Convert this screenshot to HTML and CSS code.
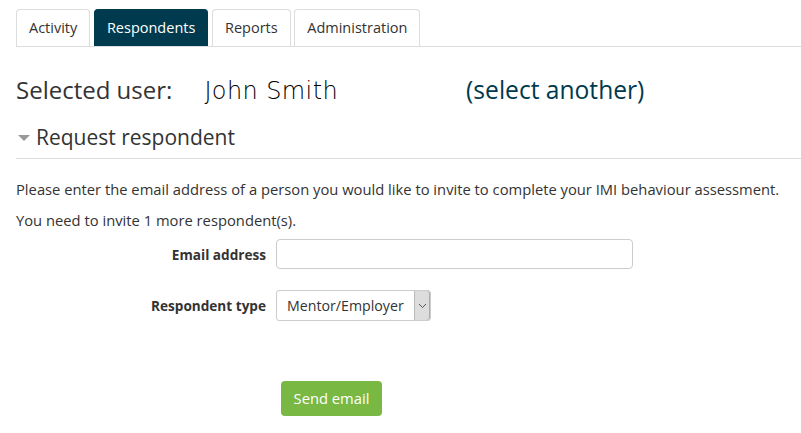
FILE: index.html
```html
<!DOCTYPE html>
<html>
<head>
<meta charset="utf-8">
<link rel="stylesheet" href="styles.css">
</head>
<body>
<div class="page">
  <ul class="tabs">
    <li class="tab">Activity</li>
    <li class="tab active">Respondents</li>
    <li class="tab">Reports</li>
    <li class="tab">Administration</li>
  </ul>
  <h2 class="selected">
    <span class="sel-label">Selected user:</span>
    <span class="sel-name">John Smith</span>
    <a class="sel-link">(select another)</a>
  </h2>
  <div class="legend">
    <span class="caret"></span>
    <span>Request respondent</span>
  </div>
  <p class="intro">Please enter the email address of a person you would like to invite to complete your IMI behaviour assessment.</p>
  <p class="intro second">You need to invite 1 more respondent(s).</p>
  <div class="form">
    <div class="row">
      <label class="lbl">Email address</label>
      <div class="input"></div>
    </div>
    <div class="row row2">
      <label class="lbl">Respondent type</label>
      <div class="select">
        <span class="sel-text">Mentor/Employer</span>
        <span class="sel-arrow">
          <svg width="9" height="6" viewBox="0 0 9 6"><path d="M1 1 L4.5 4.5 L8 1" fill="none" stroke="#555" stroke-width="1"/></svg>
        </span>
      </div>
    </div>
    <div class="row row3">
      <div class="lbl"></div>
      <div class="btn">Send email</div>
    </div>
  </div>
</div>
</body>
</html>
```
FILE: styles.css
```css
html, body { margin: 0; padding: 0; background: #fff; }
body { font-family: "Open Sans", "Liberation Sans", sans-serif; color: #333; font-size: 14.75px; }
.page { padding: 9px 0 0 16px; }
.tabs { list-style: none; margin: 0; padding: 0; display: flex; gap: 3.6px; border-bottom: 1px solid #ddd; height: 37px; }
.tab { border: 1px solid #ddd; border-bottom: none; border-radius: 4px 4px 0 0; padding: 0 12px; line-height: 36px; font-size: 14.5px; color: #333; height: 37px; box-sizing: border-box; }
.tab.active { background: #003a4f; border-color: #003a4f; color: #fff; }
.selected { margin: 27px 0 0 0; font-weight: normal; font-size: 24px; display: flex; align-items: baseline; line-height: 32px; }
.sel-label { color: #333; }
.sel-name { font-family: "DejaVu Sans", sans-serif; font-weight: 300; font-size: 24px; margin-left: 32px; color: #000; letter-spacing: 0.4px; }
.sel-link { color: #003a4f; margin-left: 128px; font-size: 24.6px; }
.legend { margin-top: 14px; display: flex; align-items: center; font-size: 21px; color: #333; border-bottom: 1px solid #ddd; padding-bottom: 5px; height: 32px; }
.caret { width: 0; height: 0; border-left: 6px solid transparent; border-right: 6px solid transparent; border-top: 6px solid #999; margin: 2px 6px 0 2px; }
.intro { margin: 20px 0 0 0; line-height: 20px; }
.intro.second { margin-top: 11px; }
.form { margin-top: 9px; }
.row { display: flex; align-items: center; }
.row2 { margin-top: 21px; }
.row3 { margin-top: 60px; }
.lbl { width: 260px; text-align: right; font-weight: bold; padding-right: 10px; box-sizing: border-box; font-size: 13.6px; }
.input { width: 357px; height: 30px; border: 1px solid #ccc; border-radius: 4px; box-sizing: border-box; }
.select { width: 155px; height: 31px; border: 1px solid #ccc; border-radius: 3px; box-sizing: border-box; display: flex; align-items: stretch; }
.sel-text { flex: 1; padding-left: 10px; line-height: 29px; color: #333; font-size: 14.2px; }
.sel-arrow { width: 15px; background: #ddd; border-left: 1px solid #bbb; border-radius: 0 3px 3px 0; display: flex; align-items: center; justify-content: center; box-shadow: inset -1px 0 0 #aaa; }
.btn { margin-left: 5px; background: #7ab844; color: #fff; border-radius: 4px; width: 101px; height: 35px; line-height: 35px; text-align: center; font-size: 14.75px; }
```
